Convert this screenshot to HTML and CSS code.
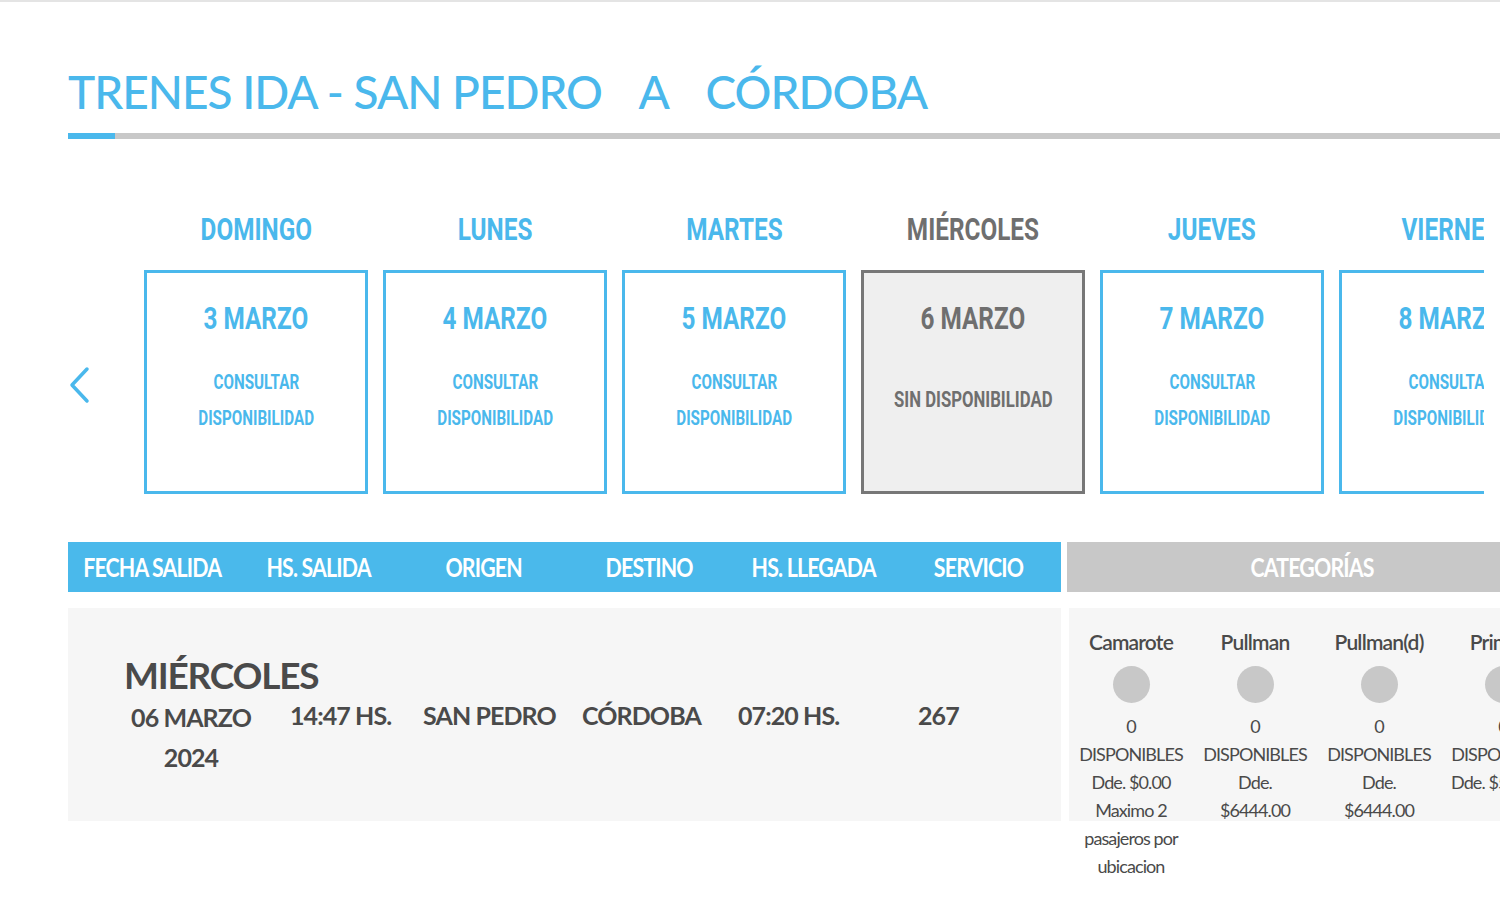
FILE: index.html
```html
<!DOCTYPE html>
<html lang="es">
<head>
<meta charset="utf-8">
<title>Trenes ida</title>
<link rel="stylesheet" href="styles.css">
</head>
<body>
<div class="page">
  <h1 class="title">TRENES IDA - SAN PEDRO <span class="sep">A</span> CÓRDOBA</h1>
  <div class="bar"><div class="bar-fill"></div></div>

  <div class="week">
    <div class="arrow">
      <svg width="24" height="38" viewBox="0 0 24 38"><polyline points="19,3 4,19 19,35" fill="none" stroke="#4ab8ec" stroke-width="3.5" stroke-linecap="round" stroke-linejoin="round"/></svg>
    </div>
    <div class="days">
      <div class="day">
        <div class="day-name"><span class="cx">DOMINGO</span></div>
        <div class="card">
          <div class="card-date"><span class="cx">3 MARZO</span></div>
          <div class="card-status"><span class="cx">CONSULTAR</span><span class="cx">DISPONIBILIDAD</span></div>
        </div>
      </div>
      <div class="day">
        <div class="day-name"><span class="cx">LUNES</span></div>
        <div class="card">
          <div class="card-date"><span class="cx">4 MARZO</span></div>
          <div class="card-status"><span class="cx">CONSULTAR</span><span class="cx">DISPONIBILIDAD</span></div>
        </div>
      </div>
      <div class="day">
        <div class="day-name"><span class="cx">MARTES</span></div>
        <div class="card">
          <div class="card-date"><span class="cx">5 MARZO</span></div>
          <div class="card-status"><span class="cx">CONSULTAR</span><span class="cx">DISPONIBILIDAD</span></div>
        </div>
      </div>
      <div class="day day-off">
        <div class="day-name"><span class="cx">MIÉRCOLES</span></div>
        <div class="card">
          <div class="card-date"><span class="cx">6 MARZO</span></div>
          <div class="card-status"><span class="cx none">SIN DISPONIBILIDAD</span></div>
        </div>
      </div>
      <div class="day">
        <div class="day-name"><span class="cx">JUEVES</span></div>
        <div class="card">
          <div class="card-date"><span class="cx">7 MARZO</span></div>
          <div class="card-status"><span class="cx">CONSULTAR</span><span class="cx">DISPONIBILIDAD</span></div>
        </div>
      </div>
      <div class="day">
        <div class="day-name"><span class="cx">VIERNES</span></div>
        <div class="card">
          <div class="card-date"><span class="cx">8 MARZO</span></div>
          <div class="card-status"><span class="cx">CONSULTAR</span><span class="cx">DISPONIBILIDAD</span></div>
        </div>
      </div>
    </div>
  </div>

  <div class="thead">
    <div class="thead-main">
      <div><span class="hx">FECHA SALIDA</span></div>
      <div><span class="hx">HS. SALIDA</span></div>
      <div><span class="hx">ORIGEN</span></div>
      <div><span class="hx">DESTINO</span></div>
      <div><span class="hx">HS. LLEGADA</span></div>
      <div><span class="hx">SERVICIO</span></div>
    </div>
    <div class="thead-cat"><span class="hx">CATEGORÍAS</span></div>
  </div>

  <div class="trow">
    <div class="trow-main">
      <div class="weekday">MIÉRCOLES</div>
      <div class="cells">
        <div class="c-date">06 MARZO<br>2024</div>
        <div class="c-dep">14:47 HS.</div>
        <div class="c-orig">SAN PEDRO</div>
        <div class="c-dest">CÓRDOBA</div>
        <div class="c-arr">07:20 HS.</div>
        <div class="c-serv">267</div>
      </div>
    </div>
    <div class="trow-cat">
      <div class="cat">
        <div class="cat-name">Camarote</div>
        <div class="dot"></div>
        <div class="cat-info">0<br>DISPONIBLES<br>Dde. $0.00<br>Maximo 2 pasajeros por ubicacion</div>
      </div>
      <div class="cat">
        <div class="cat-name">Pullman</div>
        <div class="dot"></div>
        <div class="cat-info">0<br>DISPONIBLES<br>Dde. $6444.00</div>
      </div>
      <div class="cat">
        <div class="cat-name">Pullman(d)</div>
        <div class="dot"></div>
        <div class="cat-info">0<br>DISPONIBLES<br>Dde. $6444.00</div>
      </div>
      <div class="cat">
        <div class="cat-name">Primera</div>
        <div class="dot"></div>
        <div class="cat-info">0<br>DISPONIBLES<br><span class="nowrap">Dde. $5155.00</span></div>
      </div>
    </div>
  </div>
</div>
</body>
</html>
```

FILE: styles.css
```css
html, body {
  margin: 0;
  padding: 0;
  background: #ffffff;
}
body {
  border-top: 2px solid #e4e4e4;
  font-family: "Lato", "Open Sans", sans-serif;
  color: #4a4a4a;
  overflow: hidden;
  width: 1500px;
  height: 898px;
}
.page {
  padding-left: 68px;
}
.title {
  margin: 62px 0 0 0;
  font-size: 46px;
  line-height: 56px;
  font-weight: 500;
  letter-spacing: -1px;
  color: #4ab8ec;
  white-space: nowrap;
}
.title .sep {
  margin: 0 26px;
}
.bar {
  margin-top: 13px;
  height: 6px;
  background: #c8c8c8;
}
.bar-fill {
  width: 47px;
  height: 6px;
  background: #4ab8ec;
}

/* week selector */
.week {
  display: flex;
  margin-top: 72px;
  width: 1416px;
}
.arrow {
  width: 76px;
  flex: none;
  padding-top: 155px;
  box-sizing: border-box;
}
.days {
  display: flex;
  gap: 15px;
  overflow: hidden;
  flex: 1;
}
.day {
  flex: none;
  width: 224px;
  display: flex;
  flex-direction: column;
  align-items: center;
  font-family: "Roboto", "Lato", sans-serif;
  font-weight: 700;
  color: #4ab8ec;
}
.cx {
  display: inline-block;
  transform: scaleX(0.76);
  transform-origin: center;
  white-space: nowrap;
}
.day-name {
  font-size: 32px;
  line-height: 36px;
  white-space: nowrap;
}
.card {
  margin-top: 23px;
  width: 224px;
  height: 224px;
  box-sizing: border-box;
  border: 3px solid #4ab8ec;
  display: flex;
  flex-direction: column;
  align-items: center;
  padding-top: 27px;
}
.card-date {
  font-size: 32px;
  line-height: 36px;
  white-space: nowrap;
}
.card-status {
  margin-top: 28px;
  height: 72px;
  display: flex;
  flex-direction: column;
  align-items: center;
  justify-content: center;
  font-size: 20px;
  line-height: 36px;
  white-space: nowrap;
}
.card-status .none {
  font-size: 22px;
}
.day-off .day-name {
  color: #6f6f6f;
}
.day-off .card {
  border-color: #777777;
  background: #efefef;
  color: #6f6f6f;
}

/* table header */
.thead {
  margin-top: 48px;
  display: flex;
  gap: 6px;
  height: 50px;
}
.thead-main {
  width: 993px;
  flex: none;
  background: #4ab9eb;
  display: grid;
  grid-template-columns: repeat(6, 1fr);
  align-items: center;
}
.thead-main div,
.thead-cat {
  text-align: center;
  color: #ffffff;
  font-family: "Lato", sans-serif;
  font-weight: 700;
  font-size: 26px;
  line-height: 50px;
  letter-spacing: -1px;
  white-space: nowrap;
}
.hx {
  display: inline-block;
  transform: scaleX(0.82);
  transform-origin: center;
}
.thead-cat {
  flex: 1;
  background: #c8c8c8;
  padding-left: 58px;
}

/* row */
.trow {
  margin-top: 16px;
  display: flex;
  gap: 8px;
  height: 213px;
}
.trow-main {
  width: 993px;
  flex: none;
  background: #f6f6f6;
  box-sizing: border-box;
  padding: 45px 0 0 56px;
}
.weekday {
  font-size: 37px;
  line-height: 44px;
  font-weight: 700;
  letter-spacing: -1.2px;
  color: #4a4a4a;
}
.cells {
  display: flex;
  font-size: 25px;
  line-height: 40px;
  font-weight: 700;
  letter-spacing: -0.9px;
  white-space: nowrap;
}
.c-date {
  width: 134px;
  text-align: center;
  margin-right: 32px;
}
.c-dep { width: 133px; margin-top: -2px; }
.c-orig { width: 159px; margin-top: -2px; }
.c-dest { width: 156px; margin-top: -2px; }
.c-arr { width: 180px; margin-top: -2px; }
.c-serv { margin-top: -2px; }

.trow-cat {
  flex: 1;
  background: #f6f6f6;
  display: flex;
}
.cat {
  flex: none;
  width: 124px;
  display: flex;
  flex-direction: column;
  align-items: center;
  text-align: center;
  padding-top: 20px;
  color: #4a4a4a;
}
.cat > div {
  flex-shrink: 0;
}
.cat-name {
  font-size: 21px;
  line-height: 28px;
  font-weight: 600;
  letter-spacing: -0.8px;
  white-space: nowrap;
}
.dot {
  margin-top: 10px;
  width: 37px;
  height: 37px;
  border-radius: 50%;
  background: #c8c8c8;
}
.cat-info {
  margin-top: 9px;
  font-size: 18px;
  line-height: 28px;
  letter-spacing: -0.9px;
  width: 104px;
}
.nowrap {
  white-space: nowrap;
}
```
